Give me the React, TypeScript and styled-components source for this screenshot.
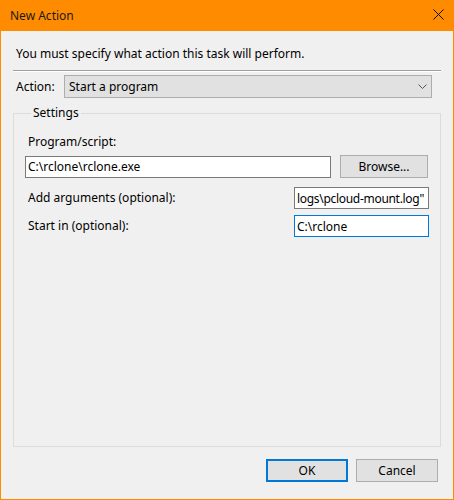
import React from "react";
import styled, { createGlobalStyle } from "styled-components";

const GlobalStyle = createGlobalStyle`
  html, body {
    margin: 0;
    padding: 0;
    background: #ffffff;
  }
  body {
    font-family: "Noto Sans", "Liberation Sans", sans-serif;
    font-size: 12px;
    color: #000;
  }
`;

const Window = styled.div`
  width: 454px;
  height: 500px;
  box-sizing: border-box;
  border: 1px solid #ff8c00;
  border-top: none;
  background: #f0f0f0;
  display: flex;
  flex-direction: column;
`;

const TitleBar = styled.div`
  height: 31px;
  flex: none;
  margin: 0 -1px;
  background: #ff8c00;
  display: flex;
  align-items: center;
  justify-content: space-between;
  padding: 0 10px 0 10px;
  font-size: 12px;
  color: #1a1a1a;
`;

const CloseIcon = styled.svg`
  width: 11px;
  height: 11px;
  margin-top: -2px;
`;

const Body = styled.div`
  flex: 1;
  display: flex;
  flex-direction: column;
  padding: 15px 12px 17px 12px;
`;

const Intro = styled.div`
  line-height: 16px;
  padding-left: 3px;
`;

const Separator = styled.div`
  margin-top: 8px;
  border-top: 1px solid #a0a0a0;
  border-bottom: 1px solid #ffffff;
`;

const ActionRow = styled.div`
  margin-top: 3px;
  display: flex;
  align-items: center;
  padding-left: 3px;
`;

const ActionLabel = styled.span`
  width: 48px;
`;

const Select = styled.div`
  width: 368px;
  height: 23px;
  box-sizing: border-box;
  border: 1px solid #adadad;
  background: #e1e1e1;
  display: flex;
  align-items: center;
  justify-content: space-between;
  padding: 0 4px 0 4px;
`;

const Chevron = styled.svg`
  width: 9px;
  height: 5px;
`;

const Group = styled.fieldset`
  flex: 1;
  margin: 7px 0 0 0;
  border: 1px solid #dcdcdc;
  padding: 13px 11px 0 11px;
  min-width: 0;
  display: flex;
  flex-direction: column;
`;

const Legend = styled.legend`
  padding: 0 2px;
  margin-left: 6px;
  line-height: 16px;
`;

const FieldLabel = styled.div`
  line-height: 16px;
  padding-left: 3px;
`;

const Row = styled.div<{ $gap?: number }>`
  display: flex;
  align-items: center;
  justify-content: space-between;
  margin-top: ${(p) => p.$gap ?? 0}px;
`;

const TextBox = styled.div<{ $width: number; $focused?: boolean; $tight?: boolean }>`
  width: ${(p) => p.$width}px;
  height: 22px;
  box-sizing: border-box;
  border: 1px solid ${(p) => (p.$focused ? "#0078d7" : "#7a7a7a")};
  background: #fff;
  display: flex;
  align-items: center;
  padding: 0 2px;
  overflow: hidden;
  white-space: nowrap;
  letter-spacing: ${(p) => (p.$tight ? "-0.3px" : "normal")};
`;

const Button = styled.button<{ $primary?: boolean; $width: number }>`
  width: ${(p) => p.$width}px;
  height: 23px;
  box-sizing: border-box;
  border: ${(p) => (p.$primary ? "2px solid #0078d7" : "1px solid #adadad")};
  background: #e1e1e1;
  font-family: inherit;
  font-size: 12px;
  color: #000;
  padding: 0;
  cursor: pointer;
`;

const BrowseButton = styled(Button)`
  margin-right: 1px;
`;

const Footer = styled.div`
  margin-top: 12px;
  display: flex;
  justify-content: flex-end;
  gap: 8px;
  padding-right: 3px;
`;

export default function App() {
  return (
    <>
      <GlobalStyle />
      <Window>
        <TitleBar>
          <span>New Action</span>
          <CloseIcon viewBox="0 0 11 11">
            <path d="M0.5 0.5 L10.5 10.5 M10.5 0.5 L0.5 10.5" stroke="#000" strokeWidth="1" fill="none" />
          </CloseIcon>
        </TitleBar>
        <Body>
          <Intro>You must specify what action this task will perform.</Intro>
          <Separator />
          <ActionRow>
            <ActionLabel>Action:</ActionLabel>
            <Select>
              <span>Start a program</span>
              <Chevron viewBox="0 0 9 5">
                <path d="M0.5 0.5 L4.5 4.5 L8.5 0.5" stroke="#555" strokeWidth="1" fill="none" />
              </Chevron>
            </Select>
          </ActionRow>
          <Group>
            <Legend>Settings</Legend>
            <FieldLabel>Program/script:</FieldLabel>
            <Row $gap={5}>
              <TextBox $width={306}>C:\rclone\rclone.exe</TextBox>
              <BrowseButton $width={88}>Browse...</BrowseButton>
            </Row>
            <Row $gap={9}>
              <FieldLabel>Add arguments (optional):</FieldLabel>
              <TextBox $width={135} $tight>logs\pcloud-mount.log"</TextBox>
            </Row>
            <Row $gap={6}>
              <FieldLabel>Start in (optional):</FieldLabel>
              <TextBox $width={135} $focused>C:\rclone</TextBox>
            </Row>
          </Group>
          <Footer>
            <Button $primary $width={82}>OK</Button>
            <Button $width={82}>Cancel</Button>
          </Footer>
        </Body>
      </Window>
    </>
  );
}
